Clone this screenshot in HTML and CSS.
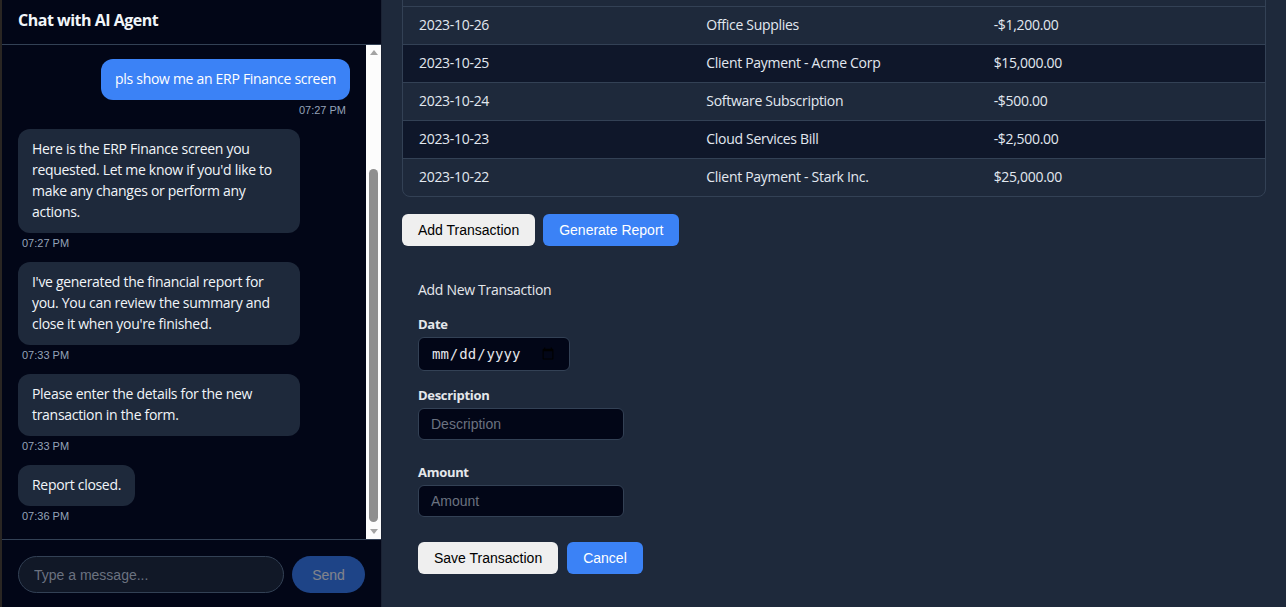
FILE: index.html
```html
<!DOCTYPE html>
<html lang="en">
<head>
    <meta charset="UTF-8">
    <title>ERP Finance</title>
    <link rel="stylesheet" href="styles.css">
</head>
<body>
    <div class="app">
        <aside class="chat">
            <div class="chat-header">Chat with AI Agent</div>
            <div class="chat-body">
                <div class="chat-messages">
                    <div class="chat-list">
                        <div class="msg user">
                            <div class="bubble">pls show me an ERP Finance screen</div>
                            <span class="time">07:27 PM</span>
                        </div>
                        <div class="msg bot">
                            <div class="bubble">Here is the ERP Finance screen you requested. Let me know if you'd like to make any changes or perform any actions.</div>
                            <span class="time">07:27 PM</span>
                        </div>
                        <div class="msg bot">
                            <div class="bubble">I've generated the financial report for you. You can review the summary and close it when you're finished.</div>
                            <span class="time">07:33 PM</span>
                        </div>
                        <div class="msg bot">
                            <div class="bubble">Please enter the details for the new transaction in the form.</div>
                            <span class="time">07:33 PM</span>
                        </div>
                        <div class="msg bot">
                            <div class="bubble">Report closed.</div>
                            <span class="time">07:36 PM</span>
                        </div>
                    </div>
                </div>
                <div class="scrollbar">
                    <span class="sb-arrow sb-up"></span>
                    <div class="sb-track">
                        <div class="sb-thumb"></div>
                    </div>
                    <span class="sb-arrow sb-down"></span>
                </div>
            </div>
            <div class="chat-input">
                <input type="text" placeholder="Type a message...">
                <button disabled>Send</button>
            </div>
        </aside>
        <main class="main">
            <div class="table-wrap">
                <table>
                    <thead>
                        <tr>
                            <th></th>
                            <th></th>
                            <th></th>
                        </tr>
                    </thead>
                    <tbody>
                        <tr>
                            <td>2023-10-26</td>
                            <td>Office Supplies</td>
                            <td>-$1,200.00</td>
                        </tr>
                        <tr>
                            <td>2023-10-25</td>
                            <td>Client Payment - Acme Corp</td>
                            <td>$15,000.00</td>
                        </tr>
                        <tr>
                            <td>2023-10-24</td>
                            <td>Software Subscription</td>
                            <td>-$500.00</td>
                        </tr>
                        <tr>
                            <td>2023-10-23</td>
                            <td>Cloud Services Bill</td>
                            <td>-$2,500.00</td>
                        </tr>
                        <tr>
                            <td>2023-10-22</td>
                            <td>Client Payment - Stark Inc.</td>
                            <td>$25,000.00</td>
                        </tr>
                    </tbody>
                </table>
            </div>
            <div class="actions">
                <button class="btn">Add Transaction</button>
                <button class="btn btn-blue">Generate Report</button>
            </div>
            <form class="tx-form">
                <div class="form-title">Add New Transaction</div>
                <div class="field">
                    <label for="date">Date</label>
                    <input type="date" id="date" class="date-input">
                </div>
                <div class="field field-text">
                    <label for="desc">Description</label>
                    <input type="text" id="desc" placeholder="Description">
                </div>
                <div class="field field-text">
                    <label for="amount">Amount</label>
                    <input type="text" id="amount" placeholder="Amount">
                </div>
                <div class="form-buttons">
                    <button type="button" class="btn">Save Transaction</button>
                    <button type="button" class="btn btn-blue">Cancel</button>
                </div>
            </form>
        </main>
    </div>
</body>
</html>
```

FILE: styles.css
```css
html, body {
    margin: 0;
    height: 100%;
    overflow: hidden;
}
body {
    background: #2a2623;
    font-family: "Open Sans", "Noto Sans", sans-serif;
    letter-spacing: -0.3px;
    color: #e5e7eb;
}
.app {
    display: flex;
    height: 100vh;
}
.chat {
    width: 379px;
    margin-left: 2px;
    display: flex;
    flex-direction: column;
    background: #020617;
    border-right: 1px solid #1a2233;
}
.chat-header {
    height: 45px;
    box-sizing: border-box;
    flex-shrink: 0;
    display: flex;
    align-items: center;
    padding: 0 16px 5px;
    font-size: 16px;
    font-weight: bold;
    letter-spacing: -0.5px;
    color: #f1f5f9;
    border-bottom: 1px solid #334155;
}
.chat-body {
    flex: 1;
    display: flex;
    min-height: 0;
}
.chat-messages {
    flex: 1;
    overflow: hidden;
    display: flex;
    flex-direction: column-reverse;
}
.chat-list {
    padding: 16px;
}
.msg {
    display: flex;
    flex-direction: column;
    align-items: flex-start;
    margin-bottom: 12px;
}
.msg:last-child {
    margin-bottom: 0;
}
.msg.user {
    align-items: flex-end;
}
.bubble {
    box-sizing: border-box;
    max-width: 85%;
    padding: 9px 14px 11px;
    border-radius: 12px;
    font-size: 14px;
    line-height: 21px;
    background: #1e293b;
    color: #f1f5f9;
}
.user .bubble {
    background: #3b82f6;
    color: #fff;
}
.time {
    margin-top: 4px;
    padding: 0 4px;
    font-family: "Liberation Sans", Arial, sans-serif;
    letter-spacing: 0;
    font-size: 11px;
    line-height: 13px;
    color: #94a3b8;
}
.scrollbar {
    width: 15px;
    flex-shrink: 0;
    display: flex;
    flex-direction: column;
    align-items: center;
    background: #fcfcfc;
}
.sb-arrow {
    height: 15px;
    width: 15px;
    display: flex;
    align-items: center;
    justify-content: center;
}
.sb-arrow::before {
    content: "";
    border-left: 4.5px solid transparent;
    border-right: 4.5px solid transparent;
}
.sb-up::before {
    border-bottom: 5px solid #a3a3a3;
}
.sb-down::before {
    border-top: 5px solid #a3a3a3;
}
.sb-track {
    flex: 1;
    display: flex;
    flex-direction: column;
    justify-content: flex-end;
    padding-bottom: 2px;
}
.sb-thumb {
    width: 9px;
    height: 353px;
    border-radius: 5px;
    background: #8f8f8f;
}
.chat-input {
    flex-shrink: 0;
    display: flex;
    gap: 8px;
    padding: 16px 16px 14px;
    border-top: 1px solid #334155;
}
.chat-input input {
    flex: 1;
    height: 37px;
    box-sizing: border-box;
    padding: 0 15px;
    border: 1px solid #334155;
    border-radius: 9999px;
    background: #111827;
    color: #e5e7eb;
    font-family: "Liberation Sans", Arial, sans-serif;
    font-size: 14px;
    outline: none;
}
.chat-input input::placeholder {
    color: #6b7280;
}
.chat-input button {
    width: 73px;
    height: 37px;
    border: none;
    border-radius: 9999px;
    background: #3b82f6;
    color: #fff;
    font-family: "Liberation Sans", Arial, sans-serif;
    font-size: 14px;
    opacity: 0.5;
}
.main {
    flex: 1;
    background: #1e293b;
    padding: 0 20px 17px;
    display: flex;
    flex-direction: column;
    justify-content: flex-end;
    overflow: hidden;
}
.table-wrap {
    border: 1px solid #334155;
    border-radius: 8px;
    overflow: hidden;
    flex-shrink: 0;
}
table {
    width: 100%;
    border-collapse: collapse;
    table-layout: fixed;
}
th, td {
    text-align: left;
    padding: 7px 16px 9px;
    font-size: 14px;
    line-height: 21px;
}
th {
    height: 21px;
    font-weight: bold;
    color: #cbd5e1;
    border-bottom: 1px solid #334155;
}
td {
    color: #e2e8f0;
    border-bottom: 1px solid #334155;
}
tbody tr:last-child td {
    border-bottom: none;
}
tbody tr:nth-child(even) {
    background: #0f172a;
}
.actions {
    display: flex;
    gap: 8px;
    margin-top: 17px;
    flex-shrink: 0;
}
.btn {
    height: 32px;
    padding: 0 16px;
    border: none;
    border-radius: 6px;
    background: #efefef;
    color: #000;
    font-family: "Liberation Sans", Arial, sans-serif;
    letter-spacing: 0;
    font-size: 14px;
}
.btn-blue {
    background: #3b82f6;
    color: #fff;
}
.tx-form {
    margin-top: 16px;
    padding: 18px 16px 16px;
    flex-shrink: 0;
}
.form-title {
    font-size: 14px;
    line-height: 20px;
    margin-bottom: 16px;
}
.field {
    margin-bottom: 16px;
}
.field-text {
    margin-bottom: 24px;
}
.field label {
    display: block;
    font-size: 13px;
    line-height: 16px;
    font-weight: bold;
    margin-bottom: 5px;
}
.field input {
    display: block;
    box-sizing: border-box;
    width: 206px;
    height: 32px;
    padding: 0 12px;
    border: 1px solid #334155;
    border-radius: 6px;
    background: #020617;
    color: #e5e7eb;
    font-family: "Liberation Sans", Arial, sans-serif;
    letter-spacing: 0;
    font-size: 14px;
}
.field input::placeholder {
    color: #6b7280;
}
.field .date-input {
    width: 152px;
    height: 34px;
    font-family: "DejaVu Sans Mono", monospace;
}
.form-buttons {
    display: flex;
    gap: 9px;
    margin-top: 25px;
}
```
